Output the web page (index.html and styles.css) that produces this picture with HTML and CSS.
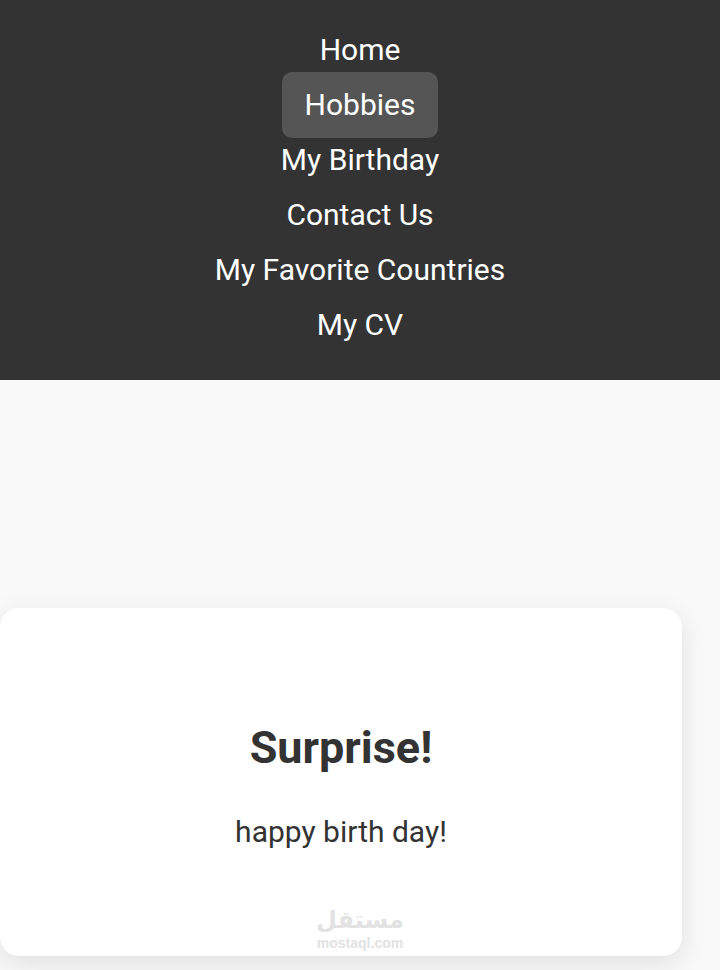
FILE: index.html
```
<!DOCTYPE html>
<html lang="en">
    <head>
        <meta charset="UTF-8">
        <meta name="viewport" content="width=device-width, initial-scale=1.0">
        <title>Surprise</title>
        <link rel="stylesheet" href="styles.css">
    </head>
    <body>
        <nav>
            <ul>
                <li><a href="#home">Home</a></li>
                <li><a href="#hobbies" class="active">Hobbies</a></li>
                <li><a href="#birthday">My Birthday</a></li>
                <li><a href="#contact">Contact Us</a></li>
                <li><a href="#countries">My Favorite Countries</a></li>
                <li><a href="#cv">My CV</a></li>
            </ul>
        </nav>
        <main>
            <section class="card">
                <h1>Surprise!</h1>
                <p>happy birth day!</p>
            </section>
        </main>
        <div class="watermark">
            <span class="mark" lang="ar" dir="rtl">مستقل</span>
            <span class="site">mostaql.com</span>
        </div>
    </body>
</html>
```

FILE: styles.css
```
body{
    position: relative;
    margin: 0;
    color: #333333;
    background-color: #f9f9f9;
    font-family: Roboto, sans-serif;
    font-size: 30px;
}
nav{
    padding: 22px 0 28px;
    background-color: #333333;
    text-align: center;
}
nav ul{
    margin: 0;
    padding: 0;
    list-style: none;
}
nav li{
    line-height: 55px;
}
nav a{
    padding: 15px 23px 16px;
    border-radius: 10px;
    color: white;
    text-decoration: none;
}
nav a.active, nav a:hover{
    background-color: #555555;
}

main{
    padding: 228px 38px 14px 0;
}
.card{
    padding: 112px 38px 106px;
    border-radius: 19px;
    background-color: white;
    box-shadow: 0 8px 28px rgba(0, 0, 0, 0.1);
    text-align: center;
}
h1{
    margin: 0 0 38px;
    font-size: 45px;
    line-height: 56px;
}
p{
    margin: 0;
    line-height: 36px;
}

/* stamp over the bottom of the card */
.watermark{
    position: absolute;
    left: 0;
    right: 0;
    bottom: 20px;
    display: flex;
    flex-direction: column;
    align-items: center;
    color: #e2e2e2;
    font-weight: bold;
    pointer-events: none;
}
.mark{
    font-family: "DejaVu Sans", sans-serif;
    font-size: 24px;
    line-height: 32px;
}
.site{
    font-family: "Liberation Sans", sans-serif;
    font-size: 14px;
    line-height: 14px;
}
```
